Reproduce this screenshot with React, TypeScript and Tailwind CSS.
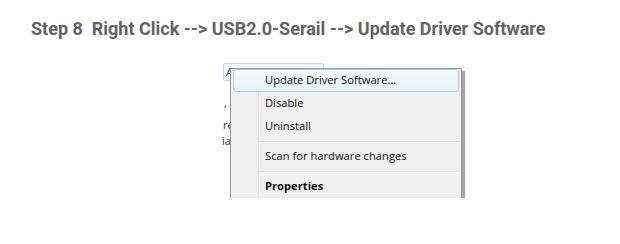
const menuFont = { fontFamily: '"Open Sans", "Noto Sans", sans-serif' };

function MenuItem({ label, active, bold }: { label: string; active?: boolean; bold?: boolean }) {
  return (
    <div
      className={
        "h-[23px] flex items-center pl-[31px] text-[11.2px] text-[#111] " +
        (active
          ? "rounded-[3px] border border-[#a9cdf2] bg-gradient-to-b from-[#f6f9fd] to-[#e9f1fb]"
          : "border border-transparent") +
        (bold ? " font-bold" : "")
      }
    >
      {label}
    </div>
  );
}

function Separator() {
  return (
    <div className="h-[7px] flex items-center pl-[26px]">
      <div className="w-full h-[2px] border-t border-[#e0e0e0] border-b border-b-white" />
    </div>
  );
}

export default function App() {
  return (
    <div className="w-[620px] h-[244px] bg-white" style={{ fontFamily: "Roboto, sans-serif" }}>
      <h1 className="pl-[31px] pt-[17px] text-[18px] leading-[24px] font-bold text-[#636363] whitespace-pre">
        Step 8  Right Click --&gt; USB2.0-Serail --&gt; Update Driver Software
      </h1>

      {/* screenshot area */}
      <div className="relative ml-[218px] mt-[17px] w-[252px] h-[140px] overflow-hidden" style={menuFont}>
        {/* device manager behind the menu */}
        <div className="flex flex-col pt-[5px] text-[11px] text-[#333]">
          <div className="ml-[5px] w-[101px] h-[18px] rounded-[2px] border border-[#bcd7f5] bg-[#f3f8fe] pl-[2px] leading-[15px] text-[#555]">
            AI-CH340 (COM11)
          </div>
          <div className="ml-[6px] mt-[14px] leading-[16px]">, a</div>
          <div className="ml-[5px] mt-[6px] leading-[16px]">re</div>
          <div className="ml-[4px] leading-[16px]">ia</div>
        </div>

        {/* context menu */}
        <div className="absolute left-[12px] top-[10px] w-[232px] h-[150px] border border-[#979797] bg-[#f0f0f0] shadow-[3px_3px_1px_rgba(0,0,0,0.35)] px-[2px]">
          <div className="absolute left-[27px] top-0 bottom-0 w-[2px] border-l border-[#e2e3e3] border-r border-r-white" />
          <div className="relative flex flex-col">
            <MenuItem label="Update Driver Software..." active />
            <MenuItem label="Disable" />
            <MenuItem label="Uninstall" />
            <Separator />
            <MenuItem label="Scan for hardware changes" />
            <Separator />
            <MenuItem label="Properties" bold />
          </div>
        </div>
      </div>
    </div>
  );
}
